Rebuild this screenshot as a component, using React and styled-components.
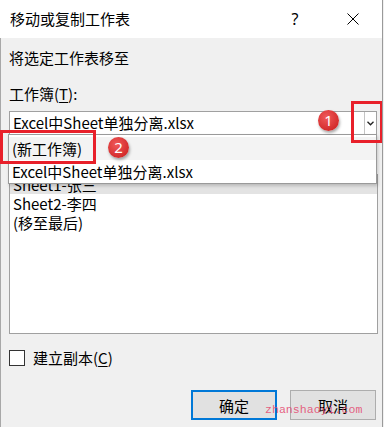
import React from 'react';
import styled, { createGlobalStyle, css } from 'styled-components';

const GlobalStyle = createGlobalStyle`
  html, body {
    margin: 0;
    padding: 0;
    background: #f0f0f0;
  }
  body {
    font-family: "Noto Sans CJK SC", "Noto Sans", sans-serif;
    color: #000;
  }
`;

const Window = styled.div`
  position: relative;
  width: 383px;
  height: 427px;
  box-sizing: border-box;
  background: #f0f0f0;
  border-right: 1px solid #9a9a9a;
  overflow: hidden;
`;

const TitleBar = styled.div`
  display: flex;
  align-items: center;
  height: 38px;
  background: #fff;
  padding-left: 10px;
  font-size: 15px;
`;

const Title = styled.div`
  flex: 1;
  line-height: 20px;
`;

const TitleButton = styled.div`
  width: 40px;
  height: 38px;
  display: flex;
  align-items: center;
  justify-content: center;
  font-size: 16px;
  font-family: "Noto Sans", sans-serif;
  ${(props) =>
    props.close &&
    css`
      margin-left: 18px;
      margin-right: 9px;
    `}
`;

const Body = styled.div`
  display: flex;
  flex-direction: column;
  padding: 10px 5px 0 8px;
  font-size: 15px;
  border-left: 1px solid #a8a8a8;
  height: 389px;
  box-sizing: border-box;
`;

const Label = styled.div`
  line-height: 20px;
  margin-top: ${(props) => props.mt || 0}px;
`;

const Key = styled.span`
  text-decoration: underline;
  text-underline-offset: 2px;
`;

const Combo = styled.div`
  display: flex;
  margin-top: 7px;
  width: 368px;
  height: 24px;
  box-sizing: border-box;
  border: 1px solid #a0a0a0;
  background: #fff;
`;

const ComboText = styled.div`
  flex: 1;
  line-height: 22px;
  padding-left: 3px;
`;

const ComboArrow = styled.div`
  width: 11px;
  border-left: 1px solid #c4c4c4;
  display: flex;
  align-items: center;
  justify-content: center;
`;

/* the sheet label above this list sits under the open drop-down */
const ListBox = styled.div`
  margin-top: 39px;
  width: 369px;
  height: 160px;
  box-sizing: border-box;
  border: 1px solid #a0a0a0;
  background: #fff;
`;

const ListItem = styled.div`
  line-height: 19px;
  padding-left: 3px;
  background: ${(props) => (props.selected ? '#e3e3e3' : 'transparent')};
`;

const CheckRow = styled.label`
  display: flex;
  align-items: center;
  gap: 8px;
  margin-top: 14px;
  line-height: 20px;
`;

const CheckBox = styled.span`
  width: 16px;
  height: 16px;
  box-sizing: border-box;
  border: 1px solid #333;
  background: #fff;
`;

const Buttons = styled.div`
  display: flex;
  justify-content: flex-end;
  gap: 13px;
  margin-top: 22px;
  padding-right: 1px;
`;

const Button = styled.div`
  width: 86px;
  height: 30px;
  box-sizing: border-box;
  display: flex;
  align-items: center;
  justify-content: center;
  background: #e1e1e1;
  border: 1px solid #adadad;
  ${(props) =>
    props.primary &&
    css`
      border: 2px solid #0078d7;
    `}
`;

const DropList = styled.div`
  position: absolute;
  left: 8px;
  top: 134px;
  width: 369px;
  box-sizing: border-box;
  padding-top: 2px;
  border: 1px solid #9a9a9a;
  background: #fff;
  box-shadow: 1px 2px 3px rgba(0, 0, 0, 0.18);
  font-size: 15px;
`;

const DropItem = styled.div`
  line-height: 23px;
  padding-left: 3px;
  background: ${(props) => (props.hover ? '#f3f3f3' : '#fff')};
`;

const Mark = styled.div`
  position: absolute;
  box-sizing: border-box;
  border: 3px solid #e8202a;
`;

const Badge = styled.div`
  position: absolute;
  width: 21px;
  height: 21px;
  border-radius: 50%;
  background: radial-gradient(circle at 40% 35%, #f05a5a, #d42c2c 70%);
  box-shadow: 1px 2px 3px rgba(0, 0, 0, 0.35);
  color: #fff;
  font-family: "Noto Sans", sans-serif;
  font-size: 15px;
  line-height: 21px;
  text-align: center;
`;

const Watermark = styled.div`
  position: absolute;
  left: 265px;
  top: 402px;
  font-family: "Liberation Mono", monospace;
  font-size: 11.6px;
  line-height: 16px;
  color: rgba(228, 70, 110, 0.85);
`;

const CloseIcon = () => (
  <svg width="12" height="12" viewBox="0 0 12 12">
    <path d="M0.5 0.5L11.5 11.5M11.5 0.5L0.5 11.5" stroke="#000" strokeWidth="1" fill="none" />
  </svg>
);

const Chevron = () => (
  <svg width="7" height="5" viewBox="0 0 7 5">
    <path d="M0.5 0.8L3.5 3.8L6.5 0.8" stroke="#222" strokeWidth="1.3" fill="none" />
  </svg>
);

const App = () => {
  const file = 'Excel中Sheet单独分离.xlsx';

  return (
    <>
      <GlobalStyle />
      <Window>
        <TitleBar>
          <Title>移动或复制工作表</Title>
          <TitleButton>?</TitleButton>
          <TitleButton close>
            <CloseIcon />
          </TitleButton>
        </TitleBar>
        <Body>
          <Label>将选定工作表移至</Label>
          <Label mt={16}>
            工作簿(<Key>T</Key>):
          </Label>
          <Combo>
            <ComboText>{file}</ComboText>
            <ComboArrow>
              <Chevron />
            </ComboArrow>
          </Combo>
          <ListBox>
            <ListItem selected>Sheet1-张三</ListItem>
            <ListItem>Sheet2-李四</ListItem>
            <ListItem>(移至最后)</ListItem>
          </ListBox>
          <CheckRow>
            <CheckBox />
            <span>
              建立副本(<Key>C</Key>)
            </span>
          </CheckRow>
          <Buttons>
            <Button primary>确定</Button>
            <Button>取消</Button>
          </Buttons>
        </Body>

        <DropList>
          <DropItem hover>(新工作簿)</DropItem>
          <DropItem>{file}</DropItem>
        </DropList>

        <Mark style={{ left: 351, top: 101, width: 32, height: 42 }} />
        <Mark style={{ left: 0, top: 130, width: 96, height: 34 }} />
        <Badge style={{ left: 318, top: 110 }}>1</Badge>
        <Badge style={{ left: 108, top: 137 }}>2</Badge>

        <Watermark>zhanshaoyi.com</Watermark>
      </Window>
    </>
  );
};

export default App;
